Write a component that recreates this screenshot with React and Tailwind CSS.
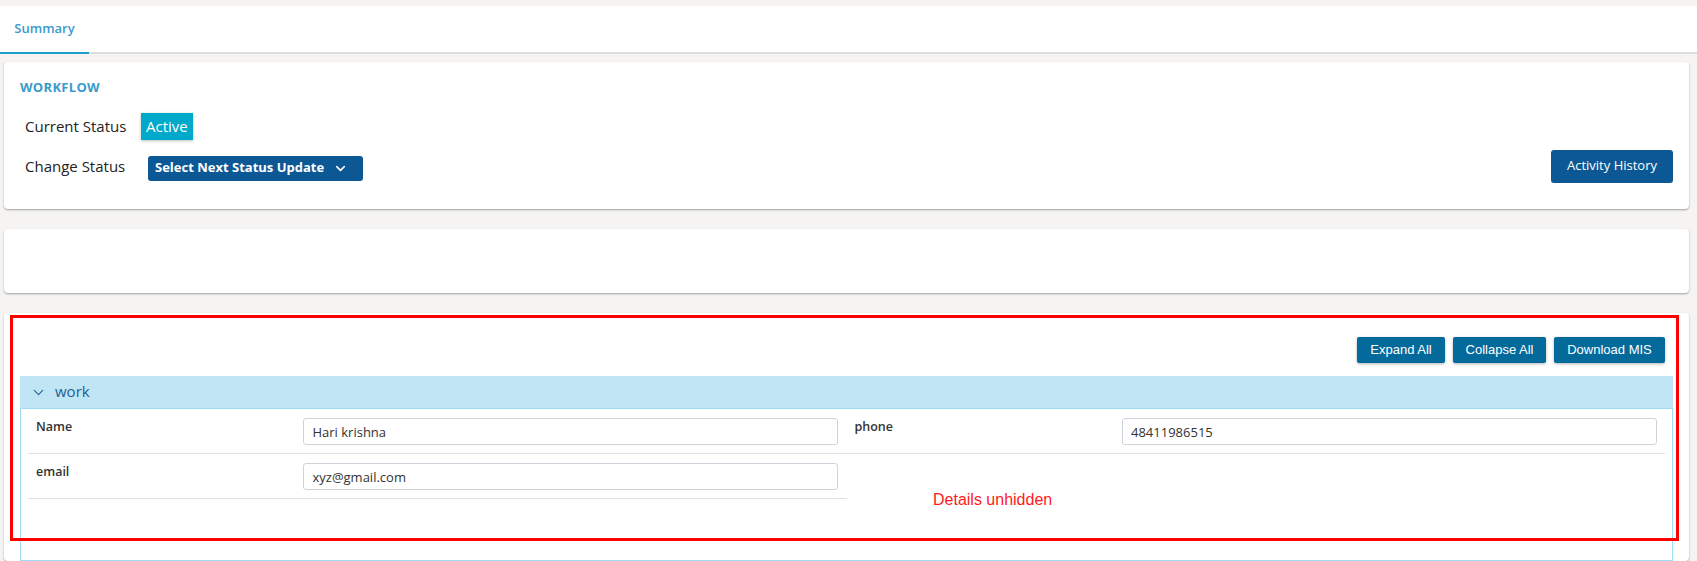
import { ChevronDown } from "lucide-react";

const fields = [
  { label: "Name", value: "Hari krishna" },
  { label: "phone", value: "48411986515" },
  { label: "email", value: "xyz@gmail.com" },
];

function Field({ label, value }) {
  return (
    <div className="flex border-b border-[#dcdfe3] px-[8px] pt-[9px] pb-[8px]">
      <div className="w-1/3 text-[12.5px] font-semibold text-[#333]">{label}</div>
      <div className="w-2/3">
        <input
          readOnly
          value={value}
          className="h-[27px] w-full rounded-[3px] border border-[#ccd3da] bg-white px-[8px] text-[13px] text-[#333] outline-none"
        />
      </div>
    </div>
  );
}

export default function App() {
  return (
    <div className="relative h-[561px] overflow-hidden bg-[#f5f4f3] pt-[6px] font-['Open_Sans',sans-serif]">
      {/* tabs */}
      <div className="flex h-[48px] border-b-2 border-[#dcdde3] bg-white">
        <div className="-mb-[2px] flex w-[89px] items-center justify-center border-b-2 border-[#1fa0c8] text-[13px] font-semibold text-[#3a9bc9]">
          Summary
        </div>
      </div>

      <div className="ml-[4px] mr-[8px]">
        {/* workflow */}
        <div className="mt-[8px] h-[147px] rounded-[4px] bg-white px-[16px] pt-[16px] shadow-[0_1px_2px_rgba(0,0,0,0.35)]">
          <div className="text-[13px] font-bold tracking-[0.3px] text-[#3a9bc9]">WORKFLOW</div>
          <div className="mt-[15px] flex h-[27px] items-center pl-[5px]">
            <span className="w-[116px] text-[15px] text-[#222]">Current Status</span>
            <span className="flex h-[27px] items-center bg-[#00a9c9] px-[5px] text-[15px] text-white shadow-[0_1px_3px_rgba(0,0,0,0.25)]">
              Active
            </span>
          </div>
          <div className="mt-[10px] flex items-start justify-between pl-[5px]">
            <div className="mt-[6px] flex h-[25px] items-center">
              <span className="-mt-[4px] w-[123px] text-[15px] text-[#222]">Change Status</span>
              <button className="flex h-[25px] w-[215px] items-center rounded-[3px] bg-[#0c5895] px-[7px] text-[13px] font-bold text-white">
                Select Next Status Update
                <ChevronDown size={15} strokeWidth={2.5} className="ml-auto mr-[8px]" />
              </button>
            </div>
            <button className="h-[33px] w-[122px] rounded-[3px] bg-[#0b5894] text-[13px] text-white">
              Activity History
            </button>
          </div>
        </div>

        {/* empty card */}
        <div className="mt-[20px] h-[64px] rounded-[4px] bg-white shadow-[0_1px_2px_rgba(0,0,0,0.35)]" />

        {/* details */}
        <div className="mt-[20px] rounded-[4px] bg-white px-[16px] pt-[24px] shadow-[0_1px_2px_rgba(0,0,0,0.35)]">
          <div className="flex justify-end gap-[8px] pr-[8px] font-['Liberation_Sans',Arial,sans-serif] text-[13px] text-white">
            <button className="h-[26px] w-[88px] rounded-[2px] bg-[#046a9c] shadow-[0_1px_3px_rgba(0,0,0,0.3)]">Expand All</button>
            <button className="h-[26px] w-[93px] rounded-[2px] bg-[#046a9c] shadow-[0_1px_3px_rgba(0,0,0,0.3)]">Collapse All</button>
            <button className="h-[26px] w-[111px] rounded-[2px] bg-[#046a9c] shadow-[0_1px_3px_rgba(0,0,0,0.3)]">Download MIS</button>
          </div>
          <div className="mt-[13px] flex h-[32px] items-center bg-[#c0e6f6] pl-[10px] text-[15px] text-[#245f8e]">
            <ChevronDown size={17} strokeWidth={1.5} />
            <span className="ml-[8px] -mt-[2px]">work</span>
          </div>
          <div className="h-[153px] border border-[#9fdcf5] px-[7px]">
            <div className="grid grid-cols-2">
              {fields.map((f) => (
                <Field key={f.label} label={f.label} value={f.value} />
              ))}
            </div>
          </div>
        </div>
      </div>

      {/* annotation */}
      <div className="pointer-events-none absolute left-[10px] top-[315px] h-[226px] w-[1669px] border-[3px] border-[#ff0000]" />
      <div className="absolute left-[933px] top-[488px] font-['Liberation_Sans',Arial,sans-serif] text-[16px] text-[#ff1a1a]">
        Details unhidden
      </div>
    </div>
  );
}
